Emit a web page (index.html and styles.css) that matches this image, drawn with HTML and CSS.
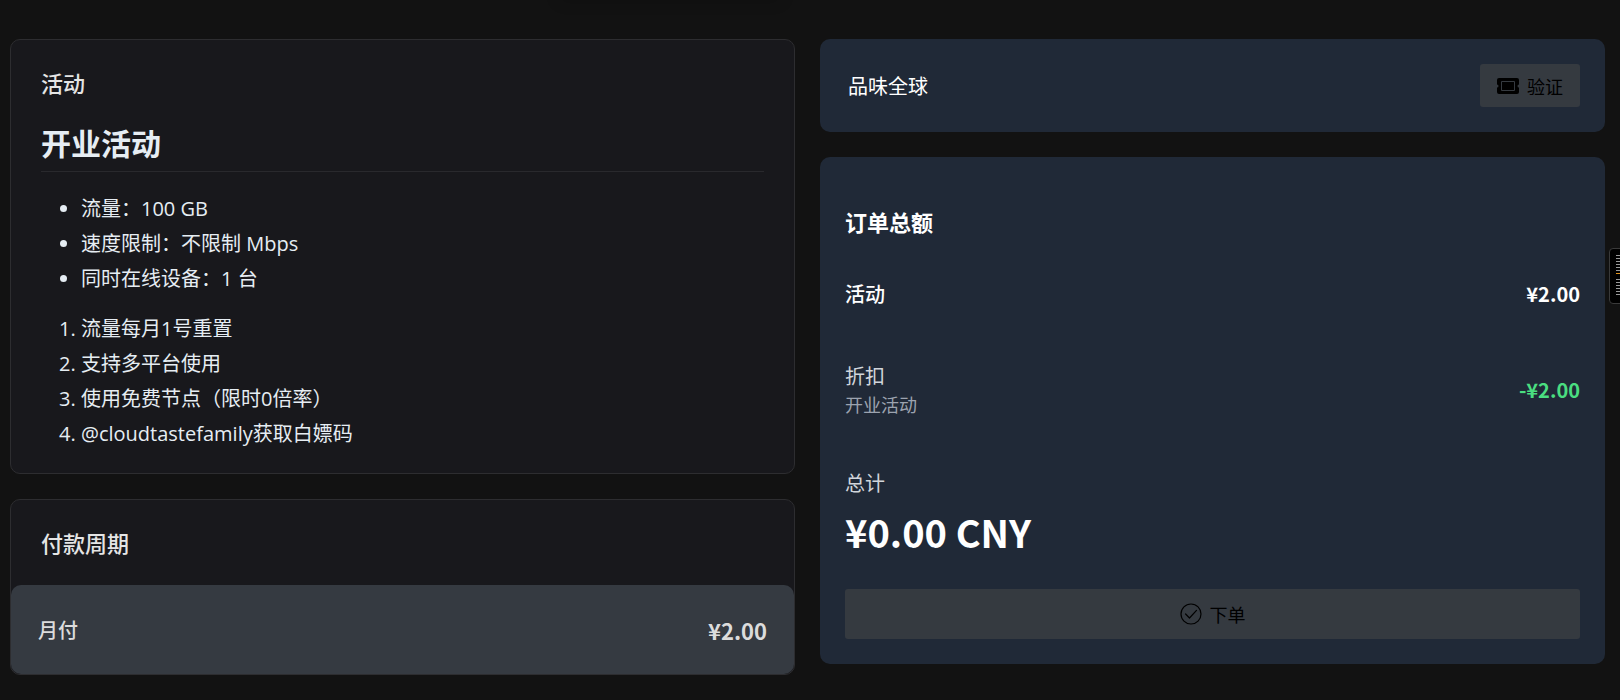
FILE: index.html
```
<!DOCTYPE html>
<html lang="zh-CN">
<head>
    <meta charset="UTF-8">
    <meta name="viewport" content="width=device-width, initial-scale=1.0">
    <title>订单</title>
    <link rel="stylesheet" href="styles.css">
</head>
<body>

    <div class="topbar"></div>

    <main class="container">
        <div class="column">
            <section class="card plan">
                <h2>活动</h2>
                <div class="markdown">
                    <h1>开业活动</h1>
                    <ul>
                        <li>流量：100 GB</li>
                        <li>速度限制：不限制 Mbps</li>
                        <li>同时在线设备：1 台</li>
                    </ul>
                    <ol>
                        <li>流量每月1号重置</li>
                        <li>支持多平台使用</li>
                        <li>使用免费节点（限时0倍率）</li>
                        <li>@cloudtastefamily获取白嫖码</li>
                    </ol>
                </div>
            </section>

            <section class="card period">
                <h2>付款周期</h2>
                <input type="radio" name="period" id="month" checked>
                <label class="period-option" for="month">
                    <span>月付</span>
                    <span class="period-price">¥2.00</span>
                </label>
            </section>
        </div>

        <div class="column">
            <form class="panel coupon">
                <input type="text" class="coupon-input" value="品味全球" aria-label="优惠码">
                <button type="button" class="btn" disabled>
                    <svg width="22" height="16" viewBox="0 0 22 16">
                        <path fill-rule="evenodd" d="M2 0h18a2 2 0 0 1 2 2v4.500a1.500 1.500 0 0 0 0 3v4.500a2 2 0 0 1-2 2H2a2 2 0 0 1-2-2v-4.500a1.500 1.500 0 0 0 0-3V2a2 2 0 0 1 2-2zM5 3a1 1 0 0 0-1 1v8a1 1 0 0 0 1 1h12a1 1 0 0 0 1-1V4a1 1 0 0 0-1-1zM5 4h12v8H5z"/>
                    </svg>
                    <span>验证</span>
                </button>
            </form>

            <section class="panel order">
                <h3>订单总额</h3>
                <div class="order-row">
                    <span>活动</span>
                    <span class="price">¥2.00</span>
                </div>
                <div class="order-row discount">
                    <div>
                        <p>折扣</p>
                        <p class="note">开业活动</p>
                    </div>
                    <span class="price">-¥2.00</span>
                </div>
                <p class="total-label">总计</p>
                <p class="total">¥0.00 CNY</p>
                <button type="button" class="btn btn-order" disabled>
                    <svg width="22" height="22" viewBox="0 0 22 22" fill="none" stroke="#000" stroke-width="1.2">
                        <circle cx="11" cy="11" r="10"/>
                        <path d="M5.6 11l3.9 4 7-7.6" stroke-linecap="round" stroke-linejoin="round"/>
                    </svg>
                    <span>下单</span>
                </button>
            </section>
        </div>
    </main>

    <div class="side-widget">
        <div class="bars"></div>
        <div class="bar-mark"></div>
        <div class="bars"></div>
    </div>

</body>
</html>
```

FILE: styles.css
```
* {
    margin: 0;
    padding: 0;
    box-sizing: border-box;
}

body {
    min-height: 100vh;
    background-color: #121212;
    color: #e5e5e5;
    font-family: "Noto Sans CJK SC", sans-serif;
    font-size: 20px;
    line-height: 30px;
    overflow-x: hidden;
}

/* Bar above the page, only its shadow reaches in */
.topbar {
    position: absolute;
    top: -20px;
    left: 50%;
    width: 220px;
    height: 16px;
    margin-left: -250px;
    box-shadow: 0 4px 16px rgba(0, 0, 0, 0.2);
}

.container {
    display: grid;
    grid-template-columns: 1fr 1fr;
    gap: 25px;
    align-items: start;
    padding: 39px 15px 25px 10px;
}

.column {
    display: flex;
    flex-direction: column;
    gap: 25px;
}

/* Left cards */
.card {
    background-color: #18181c;
    border: 1px solid #2d2d30;
    border-radius: 10px;
}

.card h2 {
    font-size: 22px;
    font-weight: 500;
    line-height: 34px;
}

.plan {
    padding: 25px 30px 24px;
}

.markdown {
    color: #e6edf3;
    font-family: "Open Sans", "Noto Sans CJK SC", sans-serif;
}

.markdown h1 {
    margin: 24px 0 22px;
    padding-bottom: 6px;
    border-bottom: 1px solid #29292d;
    font-size: 30px;
    font-weight: 600;
    line-height: 42px;
}

.markdown ul,
.markdown ol {
    padding-left: 40px;
}

.markdown ol {
    margin-top: 20px;
}

.markdown li + li {
    margin-top: 5px;
}

.period {
    position: relative;
}

.period h2 {
    padding: 25px 30px 26px;
}

.period input {
    position: absolute;
    opacity: 0;
}

.period-option {
    display: flex;
    justify-content: space-between;
    align-items: center;
    height: 89px;
    padding: 0 27px;
    border-radius: 10px;
    background-color: #353a41;
    color: #dcdcdc;
    font-weight: 500;
    cursor: pointer;
}

.period-price {
    font-size: 22px;
    font-weight: 700;
}

/* Right panels */
.panel {
    background-color: #202937;
    border-radius: 10px;
    color: #fff;
    padding: 25px;
}

.coupon {
    display: flex;
    align-items: center;
}

.coupon-input {
    flex: 1;
    min-width: 0;
    padding: 0 3px;
    border: none;
    outline: none;
    background: transparent;
    color: #fff;
    font: inherit;
}

.btn {
    display: flex;
    justify-content: center;
    align-items: center;
    gap: 8px;
    height: 43px;
    padding: 0 17px;
    border: none;
    border-radius: 3px;
    background-color: #353a40;
    color: #000;
    font-family: inherit;
    font-size: 18px;
}

.order h3 {
    padding-top: 22px;
    font-size: 22px;
    font-weight: 700;
    line-height: 34px;
}

.order-row {
    display: flex;
    justify-content: space-between;
    align-items: center;
    margin-top: 41px;
    font-weight: 500;
}

.price {
    font-weight: 700;
}

.discount {
    margin-top: 52px;
    color: #d1d5db;
    font-weight: 400;
}

.discount .price {
    color: #4ade80;
}

.note {
    color: #9ca3af;
    font-size: 18px;
    line-height: 27px;
}

.total-label {
    margin-top: 50px;
    color: #d1d5db;
}

.total {
    margin: 6px 0 29px;
    font-size: 38px;
    font-weight: 700;
    line-height: 56px;
}

.btn-order {
    width: 100%;
    height: 50px;
}

/* Widget on the window edge */
.side-widget {
    position: fixed;
    top: 248px;
    right: -20px;
    width: 31px;
    height: 56px;
    padding: 6px;
    border: 1px solid #3a3a3a;
    border-radius: 4px;
    background-color: #000;
}

.bars {
    height: 18px;
    background: repeating-linear-gradient(#999 0 1px, #000 1px 3px);
}

.bar-mark {
    height: 1px;
    margin-bottom: 5px;
    background-color: #e0921a;
}
```
